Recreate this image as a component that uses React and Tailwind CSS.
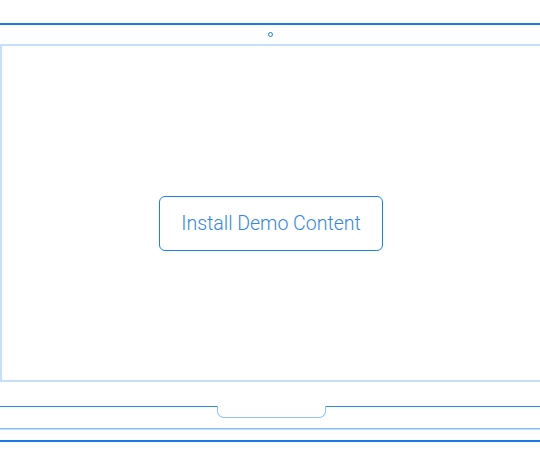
export default function App() {
  return (
    <div className="relative h-[465px] w-[540px] overflow-hidden bg-white" style={{ fontFamily: "Roboto, 'Liberation Sans', sans-serif" }}>
      <div className="h-[23px]" />
      <div className="h-[2px] w-full bg-[#1a79e8]" />
      <div className="flex h-[19px] items-center justify-center bg-[#fdfeff]">
        <div className="h-[5px] w-[5px] rounded-full border-[1.5px] border-[#1a7ff0]" />
      </div>
      <div className="flex h-[338px] w-[544px] flex-col items-center border-2 border-[#c4defb] bg-white">
        <button className="ml-[-2px] mt-[150px] flex h-[55px] w-[224px] items-center justify-center rounded-[6px] border border-[#1a80f0] text-[19.5px] font-light text-[#2f86f0]">
          Install Demo Content
        </button>
      </div>
      <div className="h-[24px]" />
      <div className="relative h-[1px] w-full bg-[#2a8bf0]">
        <div className="absolute left-[217px] top-0 h-[12px] w-[109px] rounded-b-[7px] border-x border-b border-[#8fc2f6] bg-white" />
      </div>
      <div className="h-[21px]" />
      <div className="h-[1px] w-full bg-[#86bff6]" />
      <div className="h-[1px] w-full bg-[#c2ddfb]" />
      <div className="h-[10px]" />
      <div className="h-[2px] w-full bg-[#1a79e8]" />
    </div>
  );
}
